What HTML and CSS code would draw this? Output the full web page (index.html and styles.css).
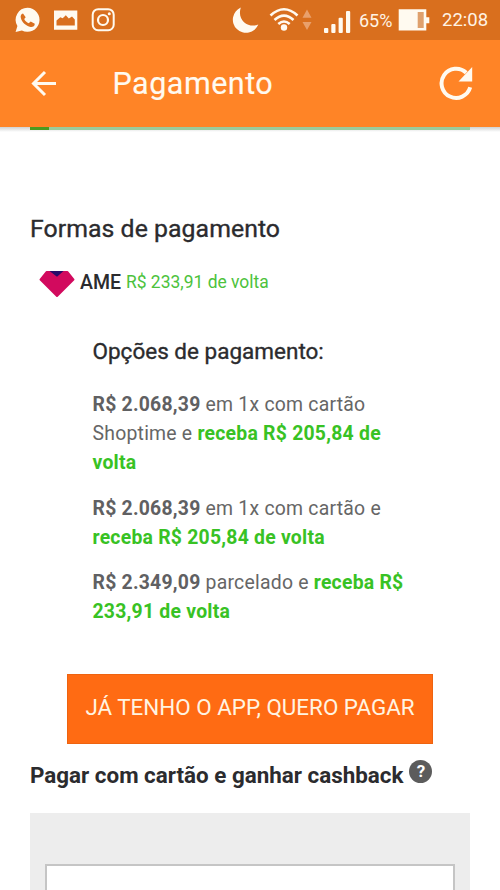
FILE: index.html
```html
<!DOCTYPE html>
<html lang="pt-BR">
<head>
<meta charset="utf-8">
<title>Pagamento</title>
<link rel="stylesheet" href="styles.css">
</head>
<body>
<div class="status">
  <svg class="status-icons" width="500" height="40" viewBox="0 0 500 40" fill="#fffaf0">
    <path d="M27.5 7.8a12 12 0 1 1-5.6 22.6L15.6 32l1.8-6A12 12 0 0 1 27.5 7.8Z"/>
    <path fill="#d96f1e" d="M23 13.4c-1.800.5-2.700 2.200-2.200 4.400 1 4.600 5.200 8.300 9.800 9.100 2.200.3 4.200-.9 4.200-3.200l-4.100-2.300-2 1.900c-2-.8-3.600-2.300-4.500-4.300l1.500-1.700Z"/>
    <path fill-rule="evenodd" d="M54 10.5h23.300v19.200H54ZM56.500 25.500h18.300v-6l-2.800-3.100-3.200 2-3-3.200-3.100 3.100-2.400-1-3.800 3.200Z"/>
    <rect x="92.700" y="9.200" width="21" height="21" rx="5.500" fill="none" stroke="#fffaf0" stroke-width="2"/>
    <circle cx="103" cy="20" r="5" fill="none" stroke="#fffaf0" stroke-width="2.200"/>
    <circle cx="109.300" cy="13.800" r="1.500"/>
    <path d="M240.800 7.500A13.200 13.200 0 1 0 258.300 24.500C249 28.500 236.500 20.500 240.800 7.500Z"/>
    <g fill="none" stroke="#fffaf0" stroke-width="2.600">
      <path d="M270.500 15.500Q284 3 297.500 15.500M274.500 20Q284 11.200 293.500 20M278.300 24Q284 19 289.700 24"/>
    </g>
    <circle cx="284" cy="27.500" r="3.200"/>
    <path fill="#e9a06b" d="M302.500 17.700 307 9.500l4.500 8.200ZM302.500 22h9l-4.500 8Z"/>
    <rect x="324" y="28" width="4.300" height="5" rx="1"/>
    <rect x="331.300" y="24" width="4.200" height="9" rx="1"/>
    <rect x="338.600" y="17.700" width="4.200" height="15.300" rx="1"/>
    <rect x="346" y="11" width="4.200" height="22" rx="1"/>
    <path d="M398.700 9.300h27.600v8h3v6h-3v7.200h-27.600Z"/>
    <rect x="417.700" y="12" width="6" height="16" fill="#dfa06c"/>
  </svg>
  <span class="battery">65%</span>
  <span class="clock">22:08</span>
</div>
<header class="bar">
  <svg class="back" width="28" height="28" viewBox="0 0 28 28" fill="none" stroke="#fffaf0" stroke-width="3"><path d="M26 13.500H4M15 2 3.500 13.500 15 25"/></svg>
  <h1 class="title">Pagamento</h1>
  <svg class="reload" width="36" height="36" viewBox="0 0 36 36"><path d="M31.200 21.300A14.600 14.600 0 1 1 27.200 6.700" fill="none" stroke="#fffaf0" stroke-width="4"/><path fill="#fffaf0" d="M33.200 1v14.500H19.500Z"/></svg>
</header>
<div class="progress"><div class="track"><div class="done"></div></div></div>
<main>
  <h2 class="forms">Formas de pagamento</h2>
  <div class="ame">
    <svg width="36" height="28" viewBox="0 0 36 28"><path fill="#d20a5e" stroke="#d20a5e" stroke-width="2" stroke-linejoin="round" d="M7.500 2h21L34.500 9.500 18 26 1.500 9.500Z"/><path fill="#270b68" d="M10.500 1h14L18 6.800Z"/></svg>
    <span class="ame-name">AME</span>
    <span class="ame-back">R$ 233,91 de volta</span>
  </div>
  <section class="options">
    <h3>Opções de pagamento:</h3>
    <p><b>R$ 2.068,39</b> em 1x com cartão<br>Shoptime e <b class="green">receba R$ 205,84 de<br>volta</b></p>
    <p><b>R$ 2.068,39</b> em 1x com cartão e<br><b class="green">receba R$ 205,84 de volta</b></p>
    <p><b>R$ 2.349,09</b> parcelado e <b class="green">receba R$<br>233,91 de volta</b></p>
  </section>
  <button class="pay">JÁ TENHO O APP, QUERO PAGAR</button>
  <div class="cashback">
    <h2>Pagar com cartão e ganhar cashback</h2>
    <span class="help">?</span>
  </div>
  <div class="panel"><div class="field"></div></div>
</main>
</body>
</html>
```

FILE: styles.css
```css
* { box-sizing: border-box; }
html { overflow: hidden; }
body {
  margin: 0;
  width: 500px;
  height: 890px;
  overflow: hidden;
  background: #fff;
  font-family: Roboto, sans-serif;
  color: #2b2b2e;
}
h1, h2, h3, p { margin: 0; font-weight: 400; white-space: nowrap; }
svg { display: block; flex: none; }
.status {
  position: relative;
  display: flex;
  justify-content: flex-end;
  height: 40px;
  padding-right: 12px;
  background: #d96f1e;
  color: #fff3e4;
  font-size: 18.500px;
  line-height: 41px;
}
.status-icons { position: absolute; left: 0; top: 0; }
.battery { width: 83px; font-size: 18px; }
.clock { width: 46px; white-space: nowrap; }
.bar {
  display: flex;
  align-items: center;
  height: 87px;
  padding: 0 25px 0 30px;
  background: #ff8426;
  color: #fffaf0;
}
.title { margin: 1px 0 0 54.500px; font-size: 30.500px; line-height: 40px; letter-spacing: .5px; -webkit-text-stroke: .15px; }
.bar .reload { margin-left: auto; }
.progress { height: 5px; padding: 0 30px; background: linear-gradient(#d0d2d2 0, #fff 100%); }
.track { height: 3px; background: #9bcb9b; }
.done { width: 19px; height: 3px; background: #4b9a20; }
main { padding: 82px 30px 0; }
.forms { font-size: 24.800px; line-height: 30px; letter-spacing: .06px; -webkit-text-stroke: .35px; }
.ame { display: flex; align-items: center; height: 30px; margin-top: 23px; padding-left: 9px; }
.ame svg { margin-top: 4px; }
.ame-name { margin-left: 5px; font-size: 19.500px; font-weight: 500; }
.ame-back { margin-left: 5px; font-size: 17.450px; color: #4cc23c; white-space: nowrap; }
.options { padding: 39px 0 0 62.500px; }
.options h3 { font-size: 22.500px; line-height: 30px; margin-bottom: 24px; -webkit-text-stroke: .35px; }
.options p { font-size: 19.400px; line-height: 29px; letter-spacing: .23px; color: #666; margin-bottom: 17px; }
.options p + p { margin-bottom: 16px; }
.options b { font-weight: 700; color: #606062; }
.options .green { color: #38c224; }
.pay {
  display: block;
  width: 366px;
  height: 70px;
  margin: 48px 0 0 37px;
  padding: 0 0 4px;
  border: 1px solid #ee6310;
  background: #ff6b13;
  color: #fff4e2;
  font: 400 22.400px/30px Roboto, sans-serif;
  white-space: nowrap;
}
.cashback { display: flex; height: 69px; padding-top: 16px; }
.cashback h2 { font-size: 22.400px; line-height: 30px; font-weight: 700; }
.help {
  width: 23px;
  height: 23px;
  margin: 0 0 0 6px;
  border-radius: 50%;
  background: #5c5c5c;
  color: #fff;
  font-size: 17px;
  font-weight: 700;
  line-height: 23px;
  text-align: center;
}
.panel { height: 90px; padding: 51px 15px 0; background: #ededed; }
.field { height: 60px; border: 2px solid #c5c5c5; background: #fff; }
```
